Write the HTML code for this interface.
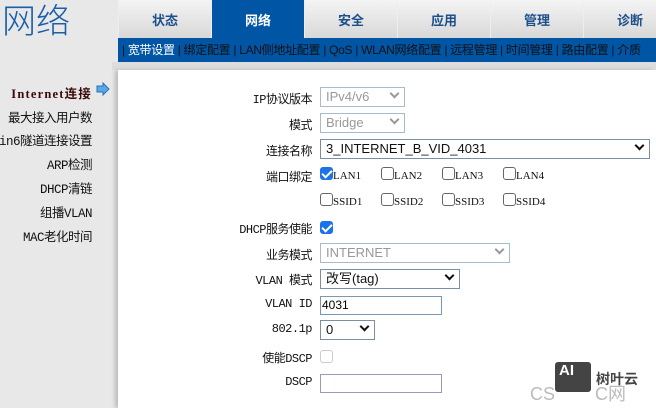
<!DOCTYPE html>
<html><head><meta charset="utf-8"><style>
*{margin:0;padding:0;box-sizing:border-box}
body{width:656px;height:408px;overflow:hidden;background:#e8e8e8;font-family:"Liberation Sans","Noto Sans CJK SC",sans-serif;position:relative}
.logo{position:absolute;left:2px;top:-6px;font-size:34px;color:#1a5fa8;font-family:"Noto Sans CJK SC",sans-serif;font-weight:300}
.tabs{position:absolute;left:118px;top:0;width:538px;height:38px;background:linear-gradient(#f4f4f4,#d8d8d8)}
.tab{position:absolute;top:0;height:38px;width:93px;text-align:center;line-height:42px;font-size:13px;font-weight:bold;color:#1d4f8a;border-left:1px solid #eee}
.tab.on{background:#0055a5;color:#fff}
.sub{position:absolute;left:118px;top:38px;width:538px;height:24px;background:#0055a5;color:#111;font-size:12px;line-height:24px;white-space:nowrap;padding-left:4px;letter-spacing:-0.3px}
.sub b{color:#fff;font-weight:normal}
.strip{position:absolute;left:112px;top:62px;width:544px;height:8px;background:#ddd}
.main{position:absolute;left:118px;top:70px;width:538px;height:338px;background:#fff;box-shadow:-3px 0 4px #bbb}
.side{position:absolute;right:564px;font-size:12.5px;color:#111;white-space:nowrap;text-align:right;font-family:"Liberation Mono","Noto Sans CJK SC",monospace;letter-spacing:-0.5px}
.lab{position:absolute;right:344px;font-size:12px;color:#111;white-space:nowrap;font-family:"Liberation Mono","Noto Sans CJK SC",monospace;letter-spacing:-0.5px}
.sel{position:absolute;left:320px;height:20px;border:1px solid #a8bbcc;font-size:13px;line-height:18px;padding-left:5px;color:#999;background:#fff}
.sel.a{border-color:#7a8fa5;color:#111}
.sel i{position:absolute;right:6px;width:7px;height:7px;border-right:2px solid #999;border-bottom:2px solid #999;transform:rotate(45deg);top:2px}
.sel.a i{border-color:#111}
.cb{position:absolute;width:13px;height:13px;border:1px solid #666;border-radius:3px;background:#fff}
.cb.on{background:#1a73e8;border-color:#1a73e8}
.cb.on:after{content:"";position:absolute;left:3px;top:0px;width:4px;height:8px;border-right:2px solid #fff;border-bottom:2px solid #fff;transform:rotate(45deg)}
.ct{position:absolute;font-size:11px;font-family:"Liberation Serif",serif;color:#111}
.inp{position:absolute;left:320px;height:19px;border:1px solid #7a98b5;font-size:12px;line-height:17px;padding-left:1px;background:#fff}
</style></head><body>
<div class="logo">网络</div>
<div class="tabs">
<div class="tab" style="left:0">状态</div>
<div class="tab on" style="left:93px">网络</div>
<div class="tab" style="left:186px">安全</div>
<div class="tab" style="left:279px">应用</div>
<div class="tab" style="left:372px">管理</div>
<div class="tab" style="left:465px">诊断</div>
</div>
<div class="sub">| <b>宽带设置</b> | 绑定配置 | LAN侧地址配置 | QoS | WLAN网络配置 | 远程管理 | 时间管理 | 路由配置 | 介质</div>
<div class="strip"></div>
<div class="main"></div>
<div class="side" style="top:83px;font-weight:bold;color:#3a0a0a;right:564px;font-family:'Liberation Serif','Noto Sans CJK SC',serif;letter-spacing:1.2px">Internet连接</div>
<svg style="position:absolute;left:96px;top:82px" width="14" height="14"><path d="M1 4h6V1l6 6-6 6V10H1z" fill="#5aa8e8" stroke="#2a6fb8"/></svg>
<div class="side" style="top:107px">最大接入用户数</div>
<div class="side" style="top:130px">4in6隧道连接设置</div>
<div class="side" style="top:154px">ARP检测</div>
<div class="side" style="top:178px">DHCP清链</div>
<div class="side" style="top:202px">组播VLAN</div>
<div class="side" style="top:226px">MAC老化时间</div>

<div class="lab" style="top:90px">IP协议版本</div>
<div class="sel" style="top:87px;width:85px">IPv4/v6<i></i></div>
<div class="lab" style="top:116px">模式</div>
<div class="sel" style="top:113px;width:85px">Bridge<i></i></div>
<div class="lab" style="top:142px">连接名称</div>
<div class="sel a" style="top:139px;width:330px">3_INTERNET_B_VID_4031<i></i></div>
<div class="lab" style="top:168px">端口绑定</div>
<div class="cb on" style="left:320px;top:167px"></div><div class="ct" style="left:333px;top:170px">LAN1</div>
<div class="cb" style="left:381px;top:167px"></div><div class="ct" style="left:394px;top:170px">LAN2</div>
<div class="cb" style="left:442px;top:167px"></div><div class="ct" style="left:455px;top:170px">LAN3</div>
<div class="cb" style="left:503px;top:167px"></div><div class="ct" style="left:516px;top:170px">LAN4</div>
<div class="cb" style="left:320px;top:193px"></div><div class="ct" style="left:333px;top:196px">SSID1</div>
<div class="cb" style="left:381px;top:193px"></div><div class="ct" style="left:394px;top:196px">SSID2</div>
<div class="cb" style="left:442px;top:193px"></div><div class="ct" style="left:455px;top:196px">SSID3</div>
<div class="cb" style="left:503px;top:193px"></div><div class="ct" style="left:516px;top:196px">SSID4</div>
<div class="lab" style="top:220px">DHCP服务使能</div>
<div class="cb on" style="left:320px;top:221px"></div>
<div class="lab" style="top:246px">业务模式</div>
<div class="sel" style="top:243px;width:190px">INTERNET<i></i></div>
<div class="lab" style="top:271px">VLAN 模式</div>
<div class="sel a" style="top:269px;width:140px">改写(tag)<i></i></div>
<div class="lab" style="top:297px">VLAN ID</div>
<div class="inp" style="top:296px;width:122px">4031</div>
<div class="lab" style="top:322px">802.1p</div>
<div class="sel a" style="top:320px;width:55px">0<i></i></div>
<div class="lab" style="top:349px">使能DSCP</div>
<div class="cb" style="left:320px;top:350px;border-color:#ccc"></div>
<div class="lab" style="top:375px">DSCP</div>
<div class="inp" style="top:374px;width:122px;border-color:#99b"></div>
<div style="position:absolute;left:530px;top:380px;font-size:18px;color:#bbb">CS&nbsp;&nbsp;&nbsp;&nbsp;&nbsp;&nbsp;&nbsp;&nbsp;C网</div>
<div style="position:absolute;left:555px;top:362px;width:36px;height:30px;background:#444;border-radius:3px;color:#fff;font-weight:bold;font-size:15px;padding-left:4px">AI</div>
<div style="position:absolute;left:596px;top:369px;font-size:14px;font-weight:bold;color:#444">树叶云</div>
</body></html>
